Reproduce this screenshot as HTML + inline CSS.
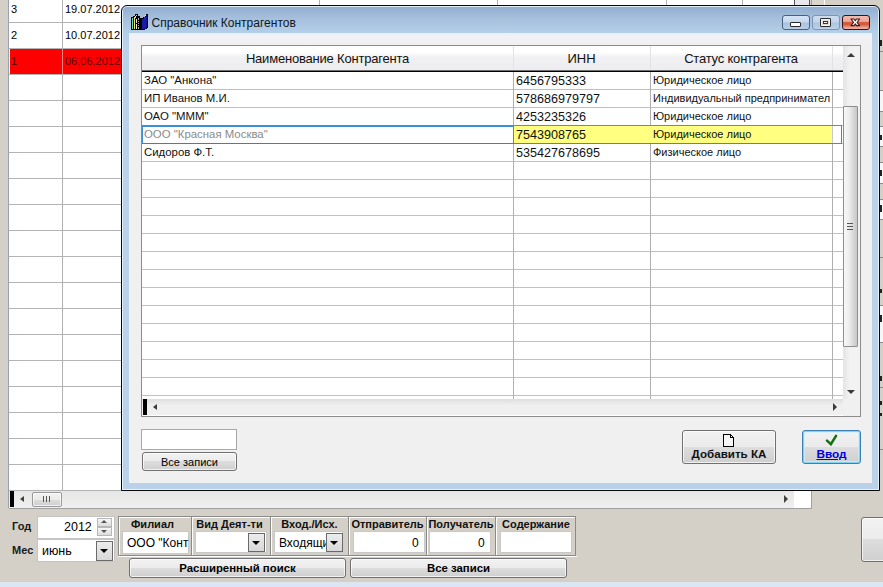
<!DOCTYPE html>
<html><head><meta charset="utf-8"><style>
*{box-sizing:border-box;margin:0;padding:0}
html,body{width:883px;height:587px;overflow:hidden}
body{position:relative;background:#d4d0c8;font-family:"Liberation Sans",sans-serif;font-size:11px;color:#000}
div,span{position:absolute}
.t{white-space:pre;line-height:1}
.hl{height:1px;background:#c4c4c4}
.vl{width:1px;background:#c4c4c4}
.btn{border:1px solid #707070;border-radius:3px;background:linear-gradient(#f2f2f2 0%,#ebebeb 50%,#dddddd 50%,#cfcfcf 100%);box-shadow:inset 0 0 0 1px rgba(255,255,255,.7)}
.inp{background:#fff;border:1px solid #b5b5b5}
.dd{border:1px solid #6a6a6a;background:linear-gradient(#f4f4f4,#d6d6d6)}
.tri{width:0;height:0;border-left:4px solid transparent;border-right:4px solid transparent;border-top:4px solid #000}
.b{font-weight:bold}
</style></head><body>
<div style="left:8px;top:0px;width:1px;height:508px;background:#9aa3ad"></div>
<div style="left:9px;top:0px;width:785px;height:491px;background:#fff"></div>
<div style="left:10px;top:49px;width:111px;height:25px;background:#ff0000"></div>
<div style="left:9px;top:22px;width:785px;height:1px;background:#b4b4b4"></div>
<div style="left:9px;top:48px;width:785px;height:1px;background:#b4b4b4"></div>
<div style="left:9px;top:74px;width:785px;height:1px;background:#b4b4b4"></div>
<div style="left:9px;top:100px;width:785px;height:1px;background:#b4b4b4"></div>
<div style="left:9px;top:126px;width:785px;height:1px;background:#b4b4b4"></div>
<div style="left:9px;top:152px;width:785px;height:1px;background:#b4b4b4"></div>
<div style="left:9px;top:178px;width:785px;height:1px;background:#b4b4b4"></div>
<div style="left:9px;top:204px;width:785px;height:1px;background:#b4b4b4"></div>
<div style="left:9px;top:230px;width:785px;height:1px;background:#b4b4b4"></div>
<div style="left:9px;top:256px;width:785px;height:1px;background:#b4b4b4"></div>
<div style="left:9px;top:282px;width:785px;height:1px;background:#b4b4b4"></div>
<div style="left:9px;top:308px;width:785px;height:1px;background:#b4b4b4"></div>
<div style="left:9px;top:334px;width:785px;height:1px;background:#b4b4b4"></div>
<div style="left:9px;top:360px;width:785px;height:1px;background:#b4b4b4"></div>
<div style="left:9px;top:386px;width:785px;height:1px;background:#b4b4b4"></div>
<div style="left:9px;top:412px;width:785px;height:1px;background:#b4b4b4"></div>
<div style="left:9px;top:438px;width:785px;height:1px;background:#b4b4b4"></div>
<div style="left:9px;top:464px;width:785px;height:1px;background:#b4b4b4"></div>
<div style="left:9px;top:490px;width:785px;height:1px;background:#b4b4b4"></div>
<div style="left:62px;top:0px;width:1px;height:491px;background:#b0b0b0"></div>
<div style="left:319px;top:0px;width:1px;height:491px;background:#b0b0b0"></div>
<div style="left:497px;top:0px;width:1px;height:491px;background:#b0b0b0"></div>
<div style="left:666px;top:0px;width:1px;height:491px;background:#b0b0b0"></div>
<div style="left:742px;top:0px;width:1px;height:491px;background:#b0b0b0"></div>
<div style="left:62px;top:49px;width:1px;height:25px;background:#ff8080"></div>
<span class="t" style="left:11px;top:4px;font-size:11px">3</span>
<span class="t" style="left:65px;top:4px;font-size:11px">19.07.2012</span>
<span class="t" style="left:11px;top:30px;font-size:11px">2</span>
<span class="t" style="left:65px;top:30px;font-size:11px">10.07.2012</span>
<span class="t" style="left:11px;top:56px;font-size:11px;color:#600000">1</span>
<span class="t" style="left:65px;top:56px;font-size:11px;color:#600000">06.06.2012</span>
<div style="left:794px;top:0px;width:16px;height:491px;background:#e8e8ec;border-left:1px solid #555;border-right:1px solid #555"></div>
<div style="left:811px;top:0px;width:13px;height:10px;background:#dad6ce"></div>
<div style="left:824px;top:0px;width:1px;height:10px;background:#fff"></div>
<div style="left:9px;top:491px;width:785px;height:17px;background:linear-gradient(#e6e6e6,#f0f0f0)"></div>
<div style="left:794px;top:491px;width:17px;height:17px;background:#fff"></div>
<div style="left:811px;top:0px;width:1px;height:508px;background:#a0a0a0"></div>
<div style="left:9px;top:508px;width:803px;height:1px;background:#a0a0a0"></div>
<div style="left:10px;top:491px;width:4px;height:16px;background:#000"></div>
<div style="left:20px;top:496px;width:0;height:0;border-top:3.5px solid transparent;border-bottom:3.5px solid transparent;border-right:4px solid #404040"></div>
<div class="btn" style="left:32px;top:492px;width:30px;height:15px;border-color:#9a9a9a;border-radius:2px"></div>
<div style="left:43px;top:496px;width:1px;height:6px;background:#555"></div>
<div style="left:46px;top:496px;width:1px;height:6px;background:#555"></div>
<div style="left:49px;top:496px;width:1px;height:6px;background:#555"></div>
<div style="left:784px;top:495px;width:0;height:0;border-top:4px solid transparent;border-bottom:4px solid transparent;border-left:4px solid #404040"></div>
<div style="left:879px;top:0px;width:4px;height:587px;background:#d4d0c8"></div>
<div style="left:880px;top:91px;width:3px;height:20px;background:#f6f6f6"></div>
<div style="left:880px;top:127px;width:3px;height:19px;background:#f6f6f6"></div>
<div style="left:880px;top:163px;width:3px;height:20px;background:#f6f6f6"></div>
<div style="left:880px;top:199px;width:3px;height:20px;background:#f6f6f6"></div>
<div style="left:880px;top:305px;width:3px;height:37px;background:#f6f6f6"></div>
<div style="left:880px;top:51px;width:3px;height:1px;background:#8c8c8c"></div>
<div style="left:880px;top:90px;width:3px;height:1px;background:#8c8c8c"></div>
<div style="left:880px;top:111px;width:3px;height:1px;background:#8c8c8c"></div>
<div style="left:880px;top:126px;width:3px;height:1px;background:#8c8c8c"></div>
<div style="left:880px;top:146px;width:3px;height:1px;background:#8c8c8c"></div>
<div style="left:880px;top:162px;width:3px;height:1px;background:#8c8c8c"></div>
<div style="left:880px;top:183px;width:3px;height:1px;background:#8c8c8c"></div>
<div style="left:880px;top:199px;width:3px;height:1px;background:#8c8c8c"></div>
<div style="left:880px;top:219px;width:3px;height:1px;background:#8c8c8c"></div>
<div style="left:880px;top:257px;width:3px;height:1px;background:#8c8c8c"></div>
<div style="left:880px;top:305px;width:3px;height:1px;background:#8c8c8c"></div>
<div style="left:880px;top:342px;width:3px;height:1px;background:#8c8c8c"></div>
<div style="left:880px;top:387px;width:3px;height:1px;background:#8c8c8c"></div>
<div style="left:880px;top:449px;width:3px;height:1px;background:#8c8c8c"></div>
<div style="left:880px;top:40px;width:2px;height:6px;background:#222"></div>
<div style="left:880px;top:135px;width:2px;height:5px;background:#222"></div>
<div style="left:880px;top:170px;width:2px;height:6px;background:#222"></div>
<div style="left:880px;top:205px;width:2px;height:7px;background:#222"></div>
<div style="left:880px;top:289px;width:2px;height:4px;background:#222"></div>
<div style="left:880px;top:315px;width:2px;height:7px;background:#222"></div>
<div style="left:880px;top:376px;width:2px;height:5px;background:#222"></div>
<div style="left:880px;top:401px;width:2px;height:4px;background:#222"></div>
<div style="left:880px;top:413px;width:2px;height:3px;background:#222"></div>
<span class="t" style="left:12px;top:521px;font-size:11px;font-weight:bold;color:#1a1a1a">Год</span>
<span class="t" style="left:12px;top:545px;font-size:11px;font-weight:bold;color:#1a1a1a">Мес</span>
<div style="left:37px;top:516px;width:78px;height:23px;background:#fff;border:1px solid #c4c4c4"></div>
<span class="t" style="left:64px;top:521px;font-size:12.5px">2012</span>
<div style="left:97px;top:518px;width:15px;height:9px;background:linear-gradient(#f6f6f6,#dcdcdc);border:1px solid #b8b8b8"></div>
<div style="left:97px;top:527px;width:15px;height:9px;background:linear-gradient(#f6f6f6,#dcdcdc);border:1px solid #b8b8b8"></div>
<div style="left:101px;top:520px;width:0;height:0;border-left:3px solid transparent;border-right:3px solid transparent;border-bottom:3px solid #555"></div>
<div style="left:101px;top:530px;width:0;height:0;border-left:3px solid transparent;border-right:3px solid transparent;border-top:3px solid #555"></div>
<div style="left:37px;top:539px;width:78px;height:23px;background:#fff;border:1px solid #c4c4c4"></div>
<span class="t" style="left:42px;top:545px;font-size:12.5px">июнь</span>
<div style="left:96px;top:541px;width:17px;height:20px;background:linear-gradient(#ececec,#d8d8d8);border:1px solid #6a6a6a"></div>
<div class="tri" style="left:100px;top:549px"></div>
<div style="left:118px;top:516px;width:458px;height:40px;background:#d4d0c8;border-top:1px solid #8a8a8a;border-left:1px solid #8a8a8a;border-bottom:1px solid #8a8a8a;border-right:1px solid #8a8a8a"></div>
<div style="left:119px;top:517px;width:456px;height:1px;background:#fff"></div>
<div style="left:119px;top:517px;width:1px;height:38px;background:#fff"></div>
<div style="left:191px;top:517px;width:1px;height:38px;background:#8a8a8a"></div>
<div style="left:192px;top:517px;width:1px;height:38px;background:#fff"></div>
<div style="left:270px;top:517px;width:1px;height:38px;background:#8a8a8a"></div>
<div style="left:271px;top:517px;width:1px;height:38px;background:#fff"></div>
<div style="left:348px;top:517px;width:1px;height:38px;background:#8a8a8a"></div>
<div style="left:349px;top:517px;width:1px;height:38px;background:#fff"></div>
<div style="left:426px;top:517px;width:1px;height:38px;background:#8a8a8a"></div>
<div style="left:427px;top:517px;width:1px;height:38px;background:#fff"></div>
<div style="left:495px;top:517px;width:1px;height:38px;background:#8a8a8a"></div>
<div style="left:496px;top:517px;width:1px;height:38px;background:#fff"></div>
<div style="left:118px;top:556px;width:459px;height:1px;background:#fff"></div>
<span class="t b" style="left:119px;top:519px;width:67px;text-align:center;font-size:11px;color:#111">Филиал</span>
<span class="t b" style="left:192px;top:519px;width:75px;text-align:center;font-size:11px;color:#111">Вид Деят-ти</span>
<span class="t b" style="left:271px;top:519px;width:77px;text-align:center;font-size:11px;color:#111">Вход./Исх.</span>
<span class="t b" style="left:349px;top:519px;width:77px;text-align:center;font-size:11px;color:#111">Отправитель</span>
<span class="t b" style="left:427px;top:519px;width:68px;text-align:center;font-size:11px;color:#111">Получатель</span>
<span class="t b" style="left:496px;top:519px;width:80px;text-align:center;font-size:11px;color:#111">Содержание</span>
<div style="left:122px;top:531px;width:67px;height:23px;background:#fff;border:1px solid #c8c8c8"></div>
<span class="t" style="left:127px;top:537px;font-size:12px">ООО "Конт</span>
<div style="left:195px;top:531px;width:72px;height:22px;background:#fff;border:1px solid #c8c8c8"></div>
<div style="left:248px;top:533px;width:17px;height:19px;background:linear-gradient(#ececec,#d8d8d8);border:1px solid #6a6a6a"></div>
<div class="tri" style="left:252px;top:541px"></div>
<div style="left:274px;top:531px;width:69px;height:22px;background:#fff;border:1px solid #c8c8c8"></div>
<span class="t" style="left:279px;top:537px;font-size:12px;width:47px;overflow:hidden">Входящи</span>
<div style="left:326px;top:533px;width:17px;height:19px;background:linear-gradient(#ececec,#d8d8d8);border:1px solid #6a6a6a"></div>
<div class="tri" style="left:330px;top:541px"></div>
<div style="left:353px;top:531px;width:72px;height:22px;background:#fff;border:1px solid #c8c8c8"></div>
<span class="t" style="left:412px;top:537px;font-size:12px">0</span>
<div style="left:429px;top:531px;width:62px;height:22px;background:#fff;border:1px solid #c8c8c8"></div>
<span class="t" style="left:478px;top:537px;font-size:12px">0</span>
<div style="left:500px;top:531px;width:72px;height:22px;background:#fff;border:1px solid #c8c8c8"></div>
<div class="btn" style="left:129px;top:558px;width:217px;height:20px"></div>
<span class="t b" style="left:129px;top:563px;width:217px;text-align:center;font-size:11.4px">Расширенный поиск</span>
<div class="btn" style="left:350px;top:558px;width:217px;height:20px"></div>
<span class="t b" style="left:350px;top:563px;width:217px;text-align:center;font-size:11.4px">Все записи</span>
<div class="btn" style="left:861px;top:517px;width:40px;height:45px"></div>
<div style="left:0px;top:582px;width:883px;height:5px;background:#dbe6f2"></div>
<div style="left:121px;top:5px;width:759px;height:486px;border:1px solid #080808;border-radius:6px 6px 0 0;background:linear-gradient(#92acd0 0px,#a8c2de 14px,#b4cfe8 27px,#bad3ea 40px,#b9d2ea 100%);box-shadow:inset 0 0 0 1px rgba(235,248,255,.85)"></div>
<div style="left:129px;top:33px;width:743px;height:450px;background:linear-gradient(#e6f2f8 0px,#f2f2f6 4px,#f0f0f0 12px,#f0f0f0 100%)"></div>
<svg style="position:absolute;left:131px;top:13px" width="18" height="18" viewBox="0 0 18 18" shape-rendering="crispEdges"><path d="M0 4H2V3H4V1H7V3H9V5H10V17H0Z" fill="#000"/><rect x="1" y="5" width="1" height="11" fill="#6fdcb0"/><rect x="3" y="4" width="1" height="12" fill="#f2e66a"/><rect x="4" y="3" width="1" height="2" fill="#f2e66a"/><rect x="5" y="2" width="1" height="1" fill="#d8d8c0"/><rect x="5" y="6" width="1" height="4" fill="#e8e8e8"/><rect x="5" y="11" width="1" height="5" fill="#e8e8e8"/><rect x="7" y="5" width="1" height="11" fill="#b0b0a8"/><rect x="7" y="7" width="1" height="1" fill="#000"/><rect x="7" y="9" width="1" height="1" fill="#000"/><rect x="7" y="11" width="1" height="1" fill="#000"/><rect x="7" y="13" width="1" height="1" fill="#000"/><path d="M10 5H12V4H13V3H14V2H15V1H17V15H16V16H14V17H10Z" fill="#000"/><rect x="11" y="6" width="4" height="10" fill="#1a1aa8"/><rect x="15" y="2" width="1" height="13" fill="#14148c"/><rect x="13" y="4" width="2" height="2" fill="#2828b8"/><rect x="14" y="2" width="1" height="1" fill="#e0e0f0"/><rect x="13" y="3" width="1" height="1" fill="#c0c0e0"/></svg>
<span class="t" style="left:151.5px;top:17px;font-size:12px;color:#0c1826">Справочник Контрагентов</span>
<div style="left:782px;top:15px;width:28px;height:15px;border:1px solid #4d5f78;border-radius:3px;background:linear-gradient(#d6e4f4 0%,#c6d8ee 48%,#a9c1de 52%,#b8cfe9 100%)"></div>
<div style="left:790px;top:22px;width:11px;height:5px;background:#fff;border:1px solid #2a2a2a;border-radius:1px"></div>
<div style="left:812px;top:15px;width:28px;height:15px;border:1px solid #7d95b5;border-radius:3px;background:linear-gradient(#cddcee 0%,#c2d4ea 48%,#aec4de 52%,#bcd0e8 100%)"></div>
<div style="left:820px;top:18px;width:11px;height:9px;background:#dcdcdc;border:1px solid #2a2a2a;border-radius:1px;box-shadow:inset 0 0 0 1px #f4f4f4"></div>
<div style="left:823px;top:21px;width:5px;height:3px;background:#f0f0f0;border:1px solid #3a3a3a"></div>
<div style="left:842px;top:15px;width:28px;height:15px;border:1px solid #3a1010;border-radius:3px;background:linear-gradient(#f2bcae 0%,#eba496 42%,#d45a3e 50%,#d35a3e 66%,#e9a090 88%,#efb0a2 100%)"></div>
<svg style="position:absolute;left:849px;top:17px" width="13" height="11" viewBox="0 0 13 11"><path d="M2 2 H5 L6.3 3.7 L7.6 2 H10.6 L8.1 5.3 L10.6 8.6 H7.6 L6.3 6.9 L5 8.6 H2 L4.5 5.3 Z" fill="#fff" stroke="#3a1a1a" stroke-width="1.1" stroke-linejoin="round"/></svg>
<div style="left:141px;top:45px;width:720px;height:372px;background:#fff;border:1px solid #8c8c8c"></div>
<div style="left:142px;top:46px;width:701px;height:24px;background:linear-gradient(#ffffff 0px,#ffffff 6px,#f1f1f3 11px,#ededf0 100%)"></div>
<div style="left:142px;top:70px;width:701px;height:1px;background:#707070"></div>
<div style="left:142px;top:71px;width:701px;height:1px;background:#000"></div>
<div style="left:142px;top:89px;width:701px;height:1px;background:#c0c0c0"></div>
<div style="left:142px;top:107px;width:701px;height:1px;background:#c0c0c0"></div>
<div style="left:142px;top:125px;width:701px;height:1px;background:#c0c0c0"></div>
<div style="left:142px;top:143px;width:701px;height:1px;background:#c0c0c0"></div>
<div style="left:142px;top:161px;width:701px;height:1px;background:#c0c0c0"></div>
<div style="left:142px;top:179px;width:701px;height:1px;background:#c0c0c0"></div>
<div style="left:142px;top:197px;width:701px;height:1px;background:#c0c0c0"></div>
<div style="left:142px;top:215px;width:701px;height:1px;background:#c0c0c0"></div>
<div style="left:142px;top:233px;width:701px;height:1px;background:#c0c0c0"></div>
<div style="left:142px;top:251px;width:701px;height:1px;background:#c0c0c0"></div>
<div style="left:142px;top:269px;width:701px;height:1px;background:#c0c0c0"></div>
<div style="left:142px;top:287px;width:701px;height:1px;background:#c0c0c0"></div>
<div style="left:142px;top:305px;width:701px;height:1px;background:#c0c0c0"></div>
<div style="left:142px;top:323px;width:701px;height:1px;background:#c0c0c0"></div>
<div style="left:142px;top:341px;width:701px;height:1px;background:#c0c0c0"></div>
<div style="left:142px;top:359px;width:701px;height:1px;background:#c0c0c0"></div>
<div style="left:142px;top:377px;width:701px;height:1px;background:#c0c0c0"></div>
<div style="left:142px;top:395px;width:701px;height:1px;background:#c0c0c0"></div>
<div style="left:513px;top:46px;width:1px;height:24px;background:#e2e2e2"></div>
<div style="left:513px;top:72px;width:1px;height:327px;background:#b0b0b0"></div>
<div style="left:650px;top:46px;width:1px;height:24px;background:#e2e2e2"></div>
<div style="left:650px;top:72px;width:1px;height:327px;background:#b0b0b0"></div>
<div style="left:832px;top:46px;width:1px;height:24px;background:#e2e2e2"></div>
<div style="left:832px;top:72px;width:1px;height:327px;background:#b0b0b0"></div>
<span class="t" style="left:142px;top:52px;font-size:13px;letter-spacing:-0.2px;width:371px;text-align:center;color:#111">Наименование Контрагента</span>
<span class="t" style="left:513px;top:52px;font-size:13px;width:137px;text-align:center;color:#111">ИНН</span>
<span class="t" style="left:650px;top:52px;font-size:13px;letter-spacing:-0.2px;width:182px;text-align:center;color:#111">Статус контрагента</span>
<div style="left:513px;top:125px;width:329px;height:19px;background:#ffff80;border-top:1px solid #5a90b0;border-bottom:1px solid #5288a8;border-right:1px solid #4a7fc0"></div>
<div style="left:832px;top:126px;width:9px;height:17px;background:#fff"></div>
<div style="left:832px;top:126px;width:1px;height:17px;background:#c8c8c8"></div>
<div style="left:142px;top:125px;width:372px;height:19px;background:#fff;border:1px solid #3b8fd9;border-top:2px solid #3b8fd9;border-bottom-color:#4a7f95"></div>
<span class="t" style="left:144px;top:75px;font-size:11.4px;color:#111">ЗАО "Анкона"</span>
<span class="t" style="left:516px;top:75px;font-size:12.6px;color:#111">6456795333</span>
<span class="t" style="left:653px;top:75px;width:179px;overflow:hidden;font-size:11px;color:#111">Юридическое лицо</span>
<span class="t" style="left:144px;top:93px;font-size:11.4px;color:#111">ИП Иванов М.И.</span>
<span class="t" style="left:516px;top:93px;font-size:12.6px;color:#111">578686979797</span>
<span class="t" style="left:653px;top:93px;width:179px;overflow:hidden;font-size:11px;color:#111">Индивидуальный предпринимател</span>
<span class="t" style="left:144px;top:111px;font-size:11.4px;color:#111">ОАО "МММ"</span>
<span class="t" style="left:516px;top:111px;font-size:12.6px;color:#111">4253235326</span>
<span class="t" style="left:653px;top:111px;width:179px;overflow:hidden;font-size:11px;color:#111">Юридическое лицо</span>
<span class="t" style="left:144px;top:129px;font-size:11.4px;color:#8a8a8a">ООО "Красная Москва"</span>
<span class="t" style="left:516px;top:129px;font-size:12.6px;color:#111">7543908765</span>
<span class="t" style="left:653px;top:129px;width:179px;overflow:hidden;font-size:11px;color:#111">Юридическое лицо</span>
<span class="t" style="left:144px;top:147px;font-size:11.4px;color:#111">Сидоров Ф.Т.</span>
<span class="t" style="left:516px;top:147px;font-size:12.6px;color:#111">535427678695</span>
<span class="t" style="left:653px;top:147px;width:179px;overflow:hidden;font-size:11px;color:#111">Физическое лицо</span>
<div style="left:843px;top:46px;width:17px;height:353px;background:linear-gradient(90deg,#e4e4e4,#f2f2f2 40%,#f2f2f2)"></div>
<div style="left:847px;top:53px;width:0;height:0;border-left:4px solid transparent;border-right:4px solid transparent;border-bottom:4px solid #3a3a3a"></div>
<div style="left:847px;top:390px;width:0;height:0;border-left:4px solid transparent;border-right:4px solid transparent;border-top:4px solid #3a3a3a"></div>
<div style="left:843px;top:106px;width:15px;height:241px;border:1px solid #8e8e8e;border-radius:1px;background:linear-gradient(90deg,#f8f8f8 0%,#ececec 40%,#c6c6c6 100%)"></div>
<div style="left:847px;top:223px;width:6px;height:1px;background:#555"></div>
<div style="left:847px;top:226px;width:6px;height:1px;background:#555"></div>
<div style="left:847px;top:229px;width:6px;height:1px;background:#555"></div>
<div style="left:142px;top:399px;width:701px;height:16px;background:linear-gradient(#dedede,#efefef 40%,#f0f0f0)"></div>
<div style="left:843px;top:399px;width:17px;height:17px;background:#f0f0f0"></div>
<div style="left:143px;top:399px;width:4px;height:16px;background:#000"></div>
<div style="left:153px;top:404px;width:0;height:0;border-top:3.5px solid transparent;border-bottom:3.5px solid transparent;border-right:4px solid #3a3a3a"></div>
<div style="left:833px;top:403px;width:0;height:0;border-top:4px solid transparent;border-bottom:4px solid transparent;border-left:4px solid #3a3a3a"></div>
<div style="left:141px;top:429px;width:96px;height:21px;background:#fff;border:1px solid #a8a8a8"></div>
<div class="btn" style="left:142px;top:452px;width:95px;height:19px"></div>
<span class="t" style="left:142px;top:457px;width:95px;text-align:center;font-size:11px">Все записи</span>
<div class="btn" style="left:682px;top:430px;width:94px;height:34px"></div>
<svg style="position:absolute;left:722px;top:434px" width="13" height="14" viewBox="0 0 13 14" shape-rendering="crispEdges"><path d="M1.5 0.5 H8.5 L11.5 3.5 V12.5 H1.5 Z" fill="#f6f6f6" stroke="#000" stroke-width="1.2"/><path d="M8.5 0.5 V3.5 H11.5" fill="none" stroke="#000" stroke-width="1.2"/></svg>
<span class="t b" style="left:682px;top:448px;width:94px;text-align:center;font-size:11.6px;color:#111">Добавить КА</span>
<div class="btn" style="left:802px;top:430px;width:59px;height:34px;border-color:#3c7fb1;box-shadow:inset 0 0 0 1px #7fd3f7,inset 0 0 0 2px rgba(200,240,255,.6)"></div>
<svg style="position:absolute;left:825px;top:434px" width="13" height="12" viewBox="0 0 13 12"><path d="M2 6.6 L5.9 10.2 L11 1.8" fill="none" stroke="#137013" stroke-width="2.5" stroke-linecap="round"/></svg>
<span class="t b" style="left:802px;top:449px;width:59px;text-align:center;font-size:11.8px;color:#0000e0;text-decoration:underline;text-underline-offset:1px">Ввод</span>
</body></html>
